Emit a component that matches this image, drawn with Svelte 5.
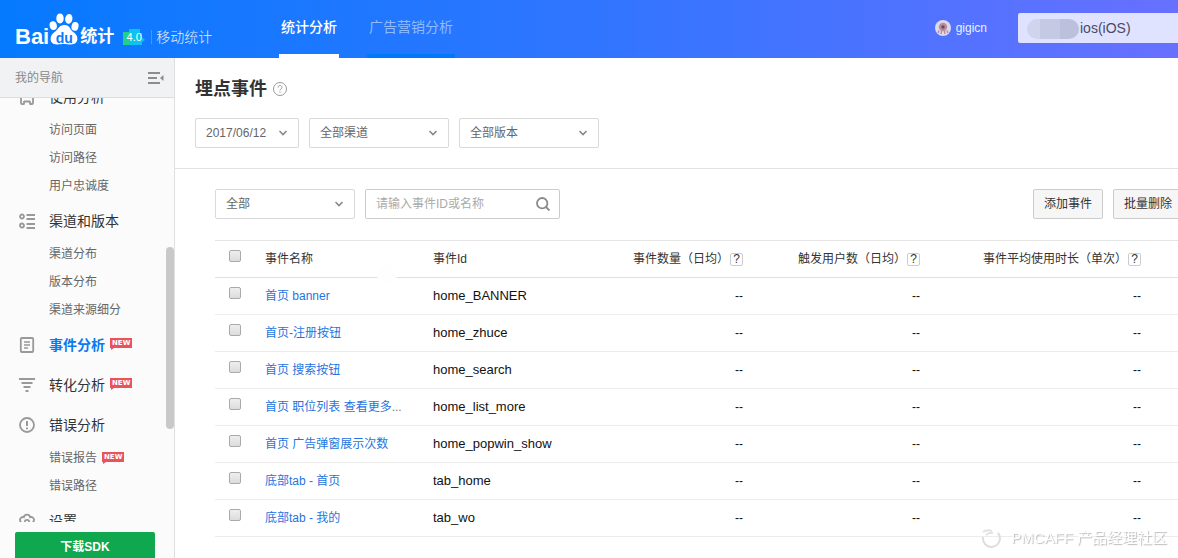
<script lang="ts">
	type Icon = 'usage' | 'channel' | 'event' | 'funnel' | 'error' | 'settings';

	interface NavItem {
		label: string;
		isNew?: boolean;
	}

	interface NavGroup extends NavItem {
		icon: Icon;
		active?: boolean;
		children?: NavItem[];
	}

	interface EventRow {
		name: string;
		id: string;
		truncated?: boolean;
	}

	const nav: NavGroup[] = [
		{
			label: '使用分析',
			icon: 'usage',
			children: [{ label: '访问页面' }, { label: '访问路径' }, { label: '用户忠诚度' }]
		},
		{
			label: '渠道和版本',
			icon: 'channel',
			children: [{ label: '渠道分布' }, { label: '版本分布' }, { label: '渠道来源细分' }]
		},
		{ label: '事件分析', icon: 'event', active: true, isNew: true },
		{ label: '转化分析', icon: 'funnel', isNew: true },
		{
			label: '错误分析',
			icon: 'error',
			children: [{ label: '错误报告', isNew: true }, { label: '错误路径' }]
		},
		{ label: '设置', icon: 'settings' }
	];

	const rows: EventRow[] = [
		{ name: '首页 banner', id: 'home_BANNER' },
		{ name: '首页-注册按钮', id: 'home_zhuce' },
		{ name: '首页 搜索按钮', id: 'home_search' },
		{ name: '首页 职位列表 查看更多', id: 'home_list_more', truncated: true },
		{ name: '首页 广告弹窗展示次数', id: 'home_popwin_show' },
		{ name: '底部tab - 首页', id: 'tab_home' },
		{ name: '底部tab - 我的', id: 'tab_wo' }
	];

	const metrics = ['事件数量（日均）', '触发用户数（日均）', '事件平均使用时长（单次）'];

	let selected = $state<string[]>([]);
	let keyword = $state('');
	let allSelected = $derived(selected.length === rows.length);

	function toggleAll() {
		selected = allSelected ? [] : rows.map((row) => row.id);
	}
</script>

{#snippet newBadge()}
	<span class="new-badge">NEW</span>
{/snippet}

{#snippet dropdown(label: string, value: string, narrow: boolean)}
	<div class="dropdown" class:narrow>
		<select aria-label={label}>
			<option>{value}</option>
		</select>
		<svg class="chevron" viewBox="0 0 10 8" aria-hidden="true">
			<path d="M1.5 2 5 5.5 8.5 2" fill="none" stroke="#888" stroke-width="1.6" />
		</svg>
	</div>
{/snippet}

<div class="page">
	<header class="topbar">
		<a class="brand" href="#home">
			<span class="brand-bai">Bai</span>
			<span class="paw">
				<svg viewBox="0 0 30 34" aria-hidden="true">
					<g fill="#fff">
						<ellipse cx="4.2" cy="13.6" rx="3.6" ry="4.4" transform="rotate(-12 4.2 13.6)" />
						<ellipse cx="11" cy="6.4" rx="3.7" ry="5" />
						<ellipse cx="19.8" cy="6.8" rx="3.6" ry="4.9" transform="rotate(10 19.8 6.8)" />
						<ellipse cx="26" cy="14.4" rx="3.5" ry="4.4" transform="rotate(12 26 14.4)" />
						<path
							d="M15 13c-4.5 0-5.7 3.9-8.4 6.3C3.2 21.6 1.600 23.600 1.600 27c0 4 3 5.600 6.800 5.400 2.400-.2 4-.5 6.600-.5s4.200.5 6.600.5c3.600.2 6.800-1.600 6.800-5.400 0-3.600-1.800-5.300-4.900-7.500-2.600-2.400-3-6.500-7.500-6.500z"
						/>
					</g>
				</svg>
				<span class="paw-text">du</span>
			</span>
			<span class="brand-tongji">统计</span>
			<span class="version">
				<svg viewBox="0 0 22 18" aria-hidden="true">
					<path d="M6 4V1h11v4h2v4l3 3-3 2v3H6z" fill="#0ac3ee" />
					<path d="M0 4h7v13H0z" fill="#23cf8c" />
				</svg>
				<span class="version-text">4.0</span>
			</span>
			<span class="product">移动统计</span>
		</a>
		<nav class="tabs">
			<a class="tab current" href="#stats">统计分析</a>
			<a class="tab" href="#ads">广告营销分析</a>
		</nav>
		<div class="account">
			<svg class="avatar" viewBox="0 0 16 16" aria-hidden="true">
				<circle cx="8" cy="8" r="8" fill="#dcd9ee" />
				<circle cx="8" cy="7" r="4.2" fill="#b78d98" />
				<circle cx="8" cy="7" r="1.7" fill="#6d4660" />
				<path d="M4 10.5 3 13M6.500 11 6 14M9.500 11 10 14M12 10.500l1 2.500" stroke="#b78d98" stroke-width="1.4" />
			</svg>
			<span>gigicn</span>
		</div>
		<div class="app-picker">
			<select aria-label="应用">
				<option>ios(iOS)</option>
			</select>
			<span class="mask"></span>
		</div>
	</header>

	<div class="body">
		<aside class="sidebar">
			<div class="sidebar-head">
				<span>我的导航</span>
				<button class="collapse" aria-label="收起导航">
					<svg viewBox="0 0 16 12" aria-hidden="true">
						<path d="M0 1h12M0 6h9M0 11h12" stroke="#8d8d8d" stroke-width="2" />
						<path d="M15.500 3v6L12 6z" fill="#8d8d8d" />
					</svg>
				</button>
			</div>
			<nav class="menu">
				<ul class="menu-list">
					{#each nav as group (group.label)}
						<li>
							<a class="group" class:active={group.active} href="#{group.icon}">
								<svg class="group-icon" viewBox="0 0 16 16" fill="none" stroke="#999" stroke-width="1.8" aria-hidden="true">
									{#if group.icon === 'usage'}
										<path d="M5 12.500h6M5 12v2.500q0 .6-.6.6H3q-1 0-1-1V2q0-1 1-1h10q1 0 1 1v12q0 1-1 1h-1.400q-.6 0-.6-.6V12" />
									{:else if group.icon === 'channel'}
										<circle cx="3" cy="3.500" r="2" />
										<circle cx="3" cy="12.500" r="2" />
										<path d="M7.500 2H16M7.500 6H16M7.500 11H16M7.500 15H16" />
									{:else if group.icon === 'event'}
										<rect x="1.800" y="1" width="12.400" height="14" rx="1" />
										<path d="M5 5h6M5 8h6M5 11h4" stroke-width="1.400" />
									{:else if group.icon === 'funnel'}
										<path d="M0 2h16M2.500 6h11M4.500 10h7M6.500 14h3" />
									{:else if group.icon === 'error'}
										<circle cx="8" cy="8" r="7" />
										<path d="M8 4v5M8 10.500v1.700" stroke-width="2" />
									{:else}
										<path
											d="M4.800 4.200a3.300 3.300 0 0 1 6.400 0 2.800 2.800 0 0 1 3.200 4.300 2.800 2.800 0 0 1-2 4.600 3.300 3.300 0 0 1-4.400 1.400 3.300 3.300 0 0 1-4.400-1.400 2.800 2.800 0 0 1-2-4.600 2.800 2.800 0 0 1 3.200-4.300z"
										/>
										<circle cx="8" cy="9" r="2.200" />
									{/if}
								</svg>
								<span>{group.label}</span>
								{#if group.isNew}{@render newBadge()}{/if}
							</a>
							{#if group.children}
								<ul>
									{#each group.children as item (item.label)}
										<li>
											<a class="item" href="#{group.icon}">
												<span>{item.label}</span>
												{#if item.isNew}{@render newBadge()}{/if}
											</a>
										</li>
									{/each}
								</ul>
							{/if}
						</li>
					{/each}
				</ul>
				<div class="scroll-thumb"></div>
			</nav>
			<div class="sidebar-foot">
				<button class="download">下载SDK</button>
			</div>
		</aside>

		<main class="content">
			<section class="page-head">
				<h1>
					埋点事件
					<svg class="help" viewBox="0 0 14 14" fill="none" stroke="#999" aria-hidden="true">
						<circle cx="7" cy="7" r="6.500" />
						<path d="M5 5.600c0-2.800 4-2.600 4-.2 0 1.500-2 1.500-2 3M7 9.600v1.200" />
					</svg>
				</h1>
				<div class="filters">
					{@render dropdown('日期', '2017/06/12', true)}
					{@render dropdown('渠道', '全部渠道', false)}
					{@render dropdown('版本', '全部版本', false)}
				</div>
			</section>

			<section class="events">
				<div class="toolbar">
					{@render dropdown('事件范围', '全部', false)}
					<div class="search">
						<input type="text" placeholder="请输入事件ID或名称" aria-label="搜索事件" bind:value={keyword} />
						<button aria-label="搜索">
							<svg viewBox="0 0 14 14" fill="none" stroke="#8a8a8a" stroke-width="1.800" aria-hidden="true">
								<circle cx="6.200" cy="6.200" r="5.200" />
								<path d="m10 10 3.500 3.500" />
							</svg>
						</button>
					</div>
					<div class="actions">
						<button class="action">添加事件</button>
						<button class="action">批量删除</button>
					</div>
				</div>

				<table>
					<colgroup>
						<col class="col-check" />
						<col class="col-name" />
						<col />
						<col class="col-count" />
						<col class="col-users" />
						<col class="col-duration" />
						<col class="col-end" />
					</colgroup>
					<thead>
						<tr>
							<th class="check">
								<input type="checkbox" aria-label="全选" checked={allSelected} onchange={toggleAll} />
							</th>
							<th class="name">事件名称</th>
							<th>事件Id</th>
							{#each metrics as metric (metric)}
								<th class="num">{metric}<span class="tip">?</span></th>
							{/each}
							<th></th>
						</tr>
					</thead>
					<tbody>
						{#each rows as row (row.id)}
							<tr>
								<td class="check">
									<input type="checkbox" aria-label={row.name} value={row.id} bind:group={selected} />
								</td>
								<td><a href="#{row.id}">{row.name}</a>{#if row.truncated}<span class="more">...</span>{/if}</td>
								<td class="id">{row.id}</td>
								<td class="num">--</td>
								<td class="num">--</td>
								<td class="num">--</td>
								<td></td>
							</tr>
						{/each}
					</tbody>
				</table>
			</section>
		</main>
	</div>

	<div class="watermark">
		<svg viewBox="0 0 22 20" fill="none" aria-hidden="true">
			<path d="M18 5a8.500 8.500 0 1 1-15 4" stroke="#ddd" stroke-width="2" />
			<path d="M3 4q4-3 9-1M6 7q3-3 7-2" stroke="#e2e2e2" stroke-width="2" />
		</svg>
		<span>PMCAFF 产品经理社区</span>
	</div>
</div>

<style>
	:global(body) {
		margin: 0;
		overflow: hidden;
	}

	.page {
		display: flex;
		flex-direction: column;
		box-sizing: border-box;
		min-width: 1203px;
		height: 100vh;
		overflow: hidden;
		background: #fff;
		color: #333;
		font: 12px/20px 'Liberation Sans', 'Noto Sans CJK SC', sans-serif;
	}

	a {
		color: inherit;
		text-decoration: none;
	}

	ul {
		margin: 0;
		padding: 0;
		list-style: none;
	}

	button,
	select,
	input {
		box-sizing: border-box;
		margin: 0;
		font: inherit;
		color: inherit;
	}

	button {
		padding: 0;
		border: 0;
		background: none;
		cursor: pointer;
	}

	svg {
		display: block;
		flex: none;
	}

	/* Top bar */
	.topbar {
		display: flex;
		flex: none;
		align-items: center;
		height: 58px;
		padding-right: 20px;
		background: linear-gradient(90deg, #057aff, #3175ff 50%, #6a70ff);
		color: #fff;
	}

	.brand {
		display: flex;
		flex: none;
		align-items: center;
		width: 264px;
		padding: 16px 0 0 15px;
		box-sizing: border-box;
	}

	.brand-bai {
		font-size: 22px;
		font-weight: bold;
	}

	.paw {
		position: relative;
		margin: -16px 1px 0 0;
	}

	.paw svg {
		width: 30px;
		height: 34px;
	}

	.paw-text {
		position: absolute;
		left: 0;
		right: 0;
		bottom: 0;
		text-align: center;
		font-size: 14px;
		line-height: 16px;
		font-weight: bold;
		color: #0a79ff;
	}

	.brand-tongji {
		font-size: 17px;
		font-weight: bold;
	}

	.version {
		position: relative;
		margin-left: 9px;
	}

	.version svg {
		width: 22px;
		height: 18px;
	}

	.version-text {
		position: absolute;
		inset: 0;
		text-align: center;
		font-size: 11px;
		line-height: 18px;
	}

	.product {
		margin-left: 6px;
		padding-left: 4px;
		border-left: 1px solid #3f97ff;
		font-size: 14px;
		line-height: 14px;
		font-weight: 300;
		color: #e2efff;
	}

	.tabs {
		display: flex;
		flex: 1;
		gap: 28px;
		padding-left: 15px;
	}

	.tab {
		padding: 0 2px;
		border-bottom: 4px solid #0078fb;
		font-size: 14px;
		line-height: 54px;
		color: #8fbcff;
	}

	.tab.current {
		border-color: #fff;
		font-weight: 500;
		color: #fff;
	}

	.account {
		display: flex;
		align-items: center;
		gap: 5px;
		margin: 0 31px 2px 0;
		color: #eaf0ff;
	}

	.avatar {
		width: 16px;
		height: 16px;
	}

	.app-picker {
		position: relative;
		width: 165px;
		margin-bottom: 2px;
	}

	.app-picker select {
		display: block;
		appearance: none;
		width: 100%;
		height: 30px;
		padding: 0 0 0 62px;
		border: 0;
		border-radius: 2px;
		background: #dfe3ff;
		font-size: 14px;
		color: #4a4a63;
	}

	.mask {
		position: absolute;
		left: 9px;
		top: 6px;
		width: 52px;
		height: 20px;
		border-radius: 10px;
		background: linear-gradient(90deg, #d0d4ec 13px, #c5cae4 13px 33px, #bbc0dc 33px);
		pointer-events: none;
	}

	.body {
		display: flex;
		flex: 1;
		min-height: 0;
	}

	/* Sidebar */
	.sidebar {
		display: flex;
		flex: none;
		flex-direction: column;
		width: 174px;
		border-right: 1px solid #e0e0e0;
		background: #fbfbfb;
	}

	.sidebar-head {
		display: flex;
		flex: none;
		align-items: center;
		justify-content: space-between;
		height: 39px;
		padding: 0 10px 0 15px;
		border-bottom: 1px solid #ddd;
		background: #f1f2f4;
		color: #888;
	}

	.collapse svg {
		width: 16px;
		height: 12px;
	}

	.menu {
		position: relative;
		flex: 1;
		min-height: 0;
		overflow: hidden;
	}

	/* the list rests in a scrolled position */
	.menu-list {
		margin-top: -23px;
	}

	.group {
		display: flex;
		align-items: center;
		box-sizing: border-box;
		height: 40px;
		padding: 3px 0 0 19px;
		font-size: 14px;
	}

	.group.active {
		font-weight: bold;
		color: #0b79f0;
	}

	.group-icon {
		width: 16px;
		height: 16px;
		margin-right: 14px;
	}

	.item {
		display: flex;
		align-items: center;
		box-sizing: border-box;
		height: 28px;
		padding: 2px 0 0 49px;
		color: #666;
	}

	.new-badge {
		position: relative;
		margin: 0 0 3px 5px;
		padding: 0 2px;
		background: #e9545b;
		font: bold 7px/10px 'DejaVu Sans', sans-serif;
		color: #fff;
	}

	.new-badge::after {
		content: '';
		position: absolute;
		left: 1px;
		top: 100%;
		border-top: 2px solid #e9545b;
		border-right: 3px solid transparent;
	}

	.scroll-thumb {
		position: absolute;
		top: 149px;
		right: 0;
		width: 8px;
		height: 43%;
		border-radius: 4px;
		background: #c9c9c9;
	}

	.sidebar-foot {
		flex: 0 0 36px;
		box-sizing: border-box;
		height: 36px;
		padding: 10px 19px 0 15px;
	}

	.download {
		width: 100%;
		height: 30px;
		border-radius: 2px;
		background: #0fa84e;
		font-weight: bold;
		color: #fff;
	}

	/* Content */
	.content {
		flex: 1;
		min-width: 0;
	}

	.page-head {
		padding: 20px;
		border-bottom: 1px solid #e2e2e2;
	}

	h1 {
		display: flex;
		align-items: center;
		gap: 6px;
		margin: 0 0 18px;
		font-size: 18px;
		line-height: 22px;
		color: #333;
	}

	.help {
		width: 14px;
		height: 14px;
	}

	.filters,
	.toolbar {
		display: flex;
		gap: 10px;
	}

	.dropdown {
		position: relative;
		width: 140px;
	}

	.dropdown.narrow {
		width: 104px;
	}

	.dropdown select {
		display: block;
		appearance: none;
		width: 100%;
		height: 30px;
		padding: 0 10px;
		border: 1px solid #d9d9d9;
		border-radius: 2px;
		background: #fff;
		color: #666;
	}

	.chevron {
		position: absolute;
		top: 11px;
		right: 11px;
		width: 10px;
		height: 8px;
		pointer-events: none;
	}

	.events {
		padding: 20px 20px 0 40px;
	}

	.search {
		display: flex;
		align-items: center;
		box-sizing: border-box;
		width: 195px;
		height: 30px;
		padding-right: 9px;
		border: 1px solid #ccc;
		border-radius: 2px;
	}

	.search input {
		flex: 1;
		min-width: 0;
		padding: 0 10px;
		border: 0;
		outline: none;
		background: none;
	}

	.search input::placeholder {
		color: #aaa;
	}

	.search svg {
		width: 14px;
		height: 14px;
	}

	.actions {
		display: flex;
		gap: 10px;
		margin-left: auto;
	}

	.action {
		width: 70px;
		height: 30px;
		border: 1px solid #ccc;
		border-radius: 2px;
		background: #f6f6f6;
	}

	table {
		width: 100%;
		margin-top: 21px;
		border-top: 1px solid #e4e4e4;
		border-spacing: 0;
		table-layout: fixed;
	}

	.col-check {
		width: 40px;
	}

	.col-name {
		width: 168px;
	}

	.col-count {
		width: 160px;
	}

	.col-users {
		width: 177px;
	}

	.col-duration {
		width: 221px;
	}

	.col-end {
		width: 32px;
	}

	th,
	td {
		height: 36px;
		padding: 0 10px;
		border-bottom: 1px solid #ececec;
		text-align: left;
		font-weight: normal;
		white-space: nowrap;
	}

	th {
		border-color: #e0e0e0;
	}

	td {
		color: #111;
	}

	td a {
		color: #1f74e0;
	}

	.id {
		font-size: 13px;
	}

	.num {
		text-align: right;
	}

	.more {
		color: #777;
	}

	th.name {
		position: relative;
	}

	th.name::after {
		content: '';
		position: absolute;
		right: 26px;
		bottom: -8px;
		width: 20px;
		height: 20px;
		border-radius: 50%;
		background: #fefefe;
	}

	.tip {
		display: inline-block;
		box-sizing: border-box;
		width: 13px;
		height: 13px;
		margin-left: 1px;
		border: 1px solid #ccc;
		border-radius: 2px;
		line-height: 11px;
		text-align: center;
	}

	th.check,
	td.check {
		height: 30px;
		padding: 0 0 6px 14px;
		line-height: 0;
	}

	.check input {
		appearance: none;
		width: 12px;
		height: 12px;
		border: 1px solid #aaa;
		border-radius: 2px;
		background: linear-gradient(#eee, #dcdcdc);
	}

	.check input:checked {
		background: #1f74e0;
	}

	.watermark {
		position: fixed;
		right: 11px;
		bottom: 10px;
		display: flex;
		align-items: center;
		gap: 9px;
		font-size: 15px;
		color: #fff;
		text-shadow: 1px 1px 1px #bbb;
		pointer-events: none;
	}

	.watermark svg {
		width: 22px;
		height: 20px;
	}
</style>
